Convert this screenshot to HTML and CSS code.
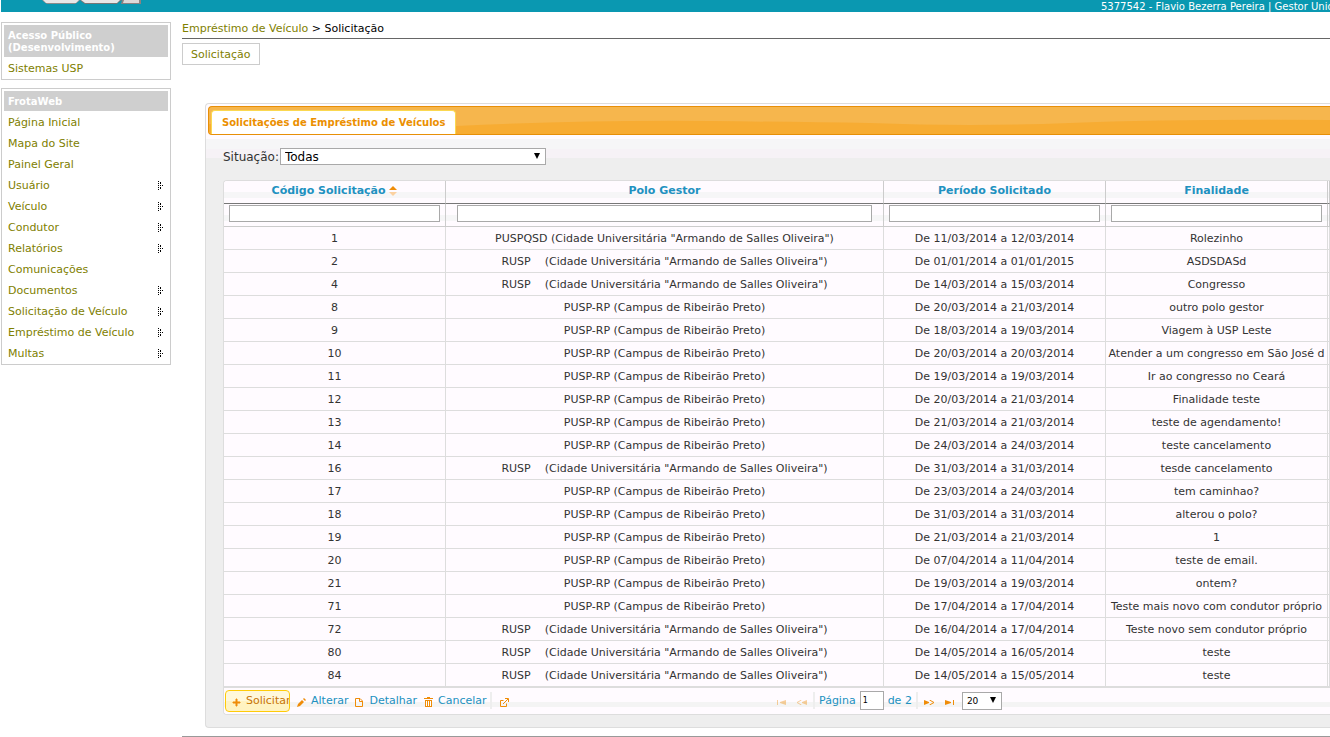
FILE: index.html
```html
<!DOCTYPE html>
<html lang="pt-BR">
<head>
<meta charset="utf-8">
<title>FrotaWeb - Solicitação</title>
<link rel="stylesheet" href="styles.css">
</head>
<body>
<svg class="defs" width="0" height="0" aria-hidden="true"><symbol id="dots" viewBox="0 0 6 9"><path d="M0 0h1v1h-1zM0 2h1v1h-1zM0 4h1v1h-1zM0 6h1v1h-1zM0 8h1v1h-1zM2 2h1v1h-1zM2 4h1v1h-1zM2 6h1v1h-1zM4 4h1v1h-1zM2 1h1v1h-1zM2 7h1v1h-1z"/></symbol></svg>
<header class="topbar">
  <svg class="logo" width="100" height="5" viewBox="0 0 100 5" aria-hidden="true">
    <path d="M0 0H38L36 2L33 4H5L2 2Z" fill="#8b8b8b"/><path d="M1 0H37L34 3H4Z" fill="#e9e7e7"/>
    <path d="M38 0H80L77 2L75 4H43L40 2Z" fill="#777"/><path d="M39 0H78L75 3H43Z" fill="#e9e7e7"/>
    <path d="M80 0H99V4H79Z" fill="#8b8181"/><path d="M82 0H97V3H81Z" fill="#ddd9d9"/>
  </svg>
  <span class="user">5377542 - Flavio Bezerra Pereira | Gestor Unidade</span>
</header>
<div class="page">
  <aside class="side">
    <nav class="box">
      <h2 class="box-title">Acesso Público (Desenvolvimento)</h2>
      <a class="item" href="#">Sistemas USP</a>
    </nav>
    <nav class="box">
      <h2 class="box-title">FrotaWeb</h2>
      <a class="item" href="#">Página Inicial</a>
      <a class="item" href="#">Mapa do Site</a>
      <a class="item" href="#">Painel Geral</a>
      <a class="item" href="#">Usuário<svg class="more" width="6" height="9" aria-hidden="true"><use href="#dots"/></svg></a>
      <a class="item" href="#">Veículo<svg class="more" width="6" height="9" aria-hidden="true"><use href="#dots"/></svg></a>
      <a class="item" href="#">Condutor<svg class="more" width="6" height="9" aria-hidden="true"><use href="#dots"/></svg></a>
      <a class="item" href="#">Relatórios<svg class="more" width="6" height="9" aria-hidden="true"><use href="#dots"/></svg></a>
      <a class="item" href="#">Comunicações</a>
      <a class="item" href="#">Documentos<svg class="more" width="6" height="9" aria-hidden="true"><use href="#dots"/></svg></a>
      <a class="item" href="#">Solicitação de Veículo<svg class="more" width="6" height="9" aria-hidden="true"><use href="#dots"/></svg></a>
      <a class="item" href="#">Empréstimo de Veículo<svg class="more" width="6" height="9" aria-hidden="true"><use href="#dots"/></svg></a>
      <a class="item" href="#">Multas<svg class="more" width="6" height="9" aria-hidden="true"><use href="#dots"/></svg></a>
    </nav>
  </aside>
  <main class="main">
    <div class="crumbs"><a href="#">Empréstimo de Veículo</a> &gt; Solicitação</div>
    <a class="local" href="#">Solicitação</a>
    <section class="panel">
      <div class="tabs">
        <svg class="wave" viewBox="0 0 1120 27" preserveAspectRatio="none" aria-hidden="true"><path d="M0 17Q120 23 247 19Q370 13 500 14Q590 15 660 16Q760 20 860 16Q960 12 1120 13V27H0Z" fill="#f7ac33"/></svg>
        <a class="tab" href="#">Solicitações de Empréstimo de Veículos</a>
      </div>
      <div class="body">
        <div class="filter">
          <label for="situacao">Situação:</label>
          <span class="pick"><select id="situacao"><option>Todas</option></select></span>
        </div>
        <div class="grid">
          <table class="list">
            <colgroup><col class="c-narrow"><col class="c-wide"><col class="c-narrow"><col class="c-narrow"><col></colgroup>
            <thead>
              <tr class="heads"><th>Código Solicitação <svg class="sort" width="8" height="10" viewBox="0 0 8 10" aria-hidden="true"><path d="M0 4L4 0L8 4Z" fill="#ef8c08"/><path d="M0 6H8L4 10Z" fill="#fbd1a0"/></svg></th><th>Polo Gestor</th><th>Período Solicitado</th><th>Finalidade</th><th></th></tr>
              <tr class="search"><th><input type="text" aria-label="Código Solicitação"></th><th class="inset"><input type="text" aria-label="Polo Gestor"></th><th><input type="text" aria-label="Período Solicitado"></th><th><input type="text" aria-label="Finalidade"></th><th></th></tr>
            </thead>
            <tbody>
              <tr><td>1</td><td>PUSPQSD (Cidade Universitária "Armando de Salles Oliveira")</td><td>De 11/03/2014 a 12/03/2014</td><td>Rolezinho</td><td></td></tr>
              <tr><td>2</td><td>RUSP &nbsp; &nbsp;(Cidade Universitária "Armando de Salles Oliveira")</td><td>De 01/01/2014 a 01/01/2015</td><td>ASDSDASd</td><td></td></tr>
              <tr><td>4</td><td>RUSP &nbsp; &nbsp;(Cidade Universitária "Armando de Salles Oliveira")</td><td>De 14/03/2014 a 15/03/2014</td><td>Congresso</td><td></td></tr>
              <tr><td>8</td><td>PUSP-RP (Campus de Ribeirão Preto)</td><td>De 20/03/2014 a 21/03/2014</td><td>outro polo gestor</td><td></td></tr>
              <tr><td>9</td><td>PUSP-RP (Campus de Ribeirão Preto)</td><td>De 18/03/2014 a 19/03/2014</td><td>Viagem à USP Leste</td><td></td></tr>
              <tr><td>10</td><td>PUSP-RP (Campus de Ribeirão Preto)</td><td>De 20/03/2014 a 20/03/2014</td><td>Atender a um congresso em São José d</td><td></td></tr>
              <tr><td>11</td><td>PUSP-RP (Campus de Ribeirão Preto)</td><td>De 19/03/2014 a 19/03/2014</td><td>Ir ao congresso no Ceará</td><td></td></tr>
              <tr><td>12</td><td>PUSP-RP (Campus de Ribeirão Preto)</td><td>De 20/03/2014 a 21/03/2014</td><td>Finalidade teste</td><td></td></tr>
              <tr><td>13</td><td>PUSP-RP (Campus de Ribeirão Preto)</td><td>De 21/03/2014 a 21/03/2014</td><td>teste de agendamento!</td><td></td></tr>
              <tr><td>14</td><td>PUSP-RP (Campus de Ribeirão Preto)</td><td>De 24/03/2014 a 24/03/2014</td><td>teste cancelamento</td><td></td></tr>
              <tr><td>16</td><td>RUSP &nbsp; &nbsp;(Cidade Universitária "Armando de Salles Oliveira")</td><td>De 31/03/2014 a 31/03/2014</td><td>tesde cancelamento</td><td></td></tr>
              <tr><td>17</td><td>PUSP-RP (Campus de Ribeirão Preto)</td><td>De 23/03/2014 a 24/03/2014</td><td>tem caminhao?</td><td></td></tr>
              <tr><td>18</td><td>PUSP-RP (Campus de Ribeirão Preto)</td><td>De 31/03/2014 a 31/03/2014</td><td>alterou o polo?</td><td></td></tr>
              <tr><td>19</td><td>PUSP-RP (Campus de Ribeirão Preto)</td><td>De 21/03/2014 a 21/03/2014</td><td>1</td><td></td></tr>
              <tr><td>20</td><td>PUSP-RP (Campus de Ribeirão Preto)</td><td>De 07/04/2014 a 11/04/2014</td><td>teste de email.</td><td></td></tr>
              <tr><td>21</td><td>PUSP-RP (Campus de Ribeirão Preto)</td><td>De 19/03/2014 a 19/03/2014</td><td>ontem?</td><td></td></tr>
              <tr><td>71</td><td>PUSP-RP (Campus de Ribeirão Preto)</td><td>De 17/04/2014 a 17/04/2014</td><td>Teste mais novo com condutor próprio</td><td></td></tr>
              <tr><td>72</td><td>RUSP &nbsp; &nbsp;(Cidade Universitária "Armando de Salles Oliveira")</td><td>De 16/04/2014 a 17/04/2014</td><td>Teste novo sem condutor próprio</td><td></td></tr>
              <tr><td>80</td><td>RUSP &nbsp; &nbsp;(Cidade Universitária "Armando de Salles Oliveira")</td><td>De 14/05/2014 a 16/05/2014</td><td>teste</td><td></td></tr>
              <tr><td>84</td><td>RUSP &nbsp; &nbsp;(Cidade Universitária "Armando de Salles Oliveira")</td><td>De 14/05/2014 a 15/05/2014</td><td>teste</td><td></td></tr>
            </tbody>
          </table>
          <div class="bar">
            <div class="actions">
              <button class="act on" type="button"><svg width="9" height="9" viewBox="0 0 9 9" aria-hidden="true"><path d="M4 1H5V4H8V5H5V8H4V5H1V4H4Z" fill="#ef8c08" stroke="#ef8c08"/></svg>Solicitar</button>
              <button class="act" type="button"><svg width="9" height="9" viewBox="0 0 9 9" aria-hidden="true"><path d="M0 9L1 6L5 2L7 4L3 8ZM6 1L7 0L9 2L8 3Z" fill="#ef8c08"/></svg>Alterar</button>
              <button class="act" type="button"><svg width="9" height="9" viewBox="0 0 9 9" aria-hidden="true"><path d="M.5 .5H5L7.500 3V8.500H.5ZM4.500 1V3.500H7" fill="none" stroke="#ef8c08"/></svg>Detalhar</button>
              <button class="act" type="button"><svg width="9" height="10" viewBox="0 0 9 10" aria-hidden="true"><path d="M3 0H6V1H9V2H0V1H3ZM1 3H8V10H1Z" fill="#ef8c08"/><path d="M2.500 4V9M4.500 4V9M6.500 4V9" stroke="#fff"/></svg>Cancelar</button>
              <span class="sep"></span>
              <button class="act" type="button" aria-label="Exportar"><svg width="9" height="9" viewBox="0 0 9 9" aria-hidden="true"><path d="M3.500 2.500H.5V8.500H6.500V5.500M3 6L8 1M5 .5H8.500V4" fill="none" stroke="#ef8c08"/></svg></button>
            </div>
            <div class="pager">
              <button class="nav off" type="button" aria-label="Primeira"><svg width="9" height="5" viewBox="0 0 9 5" aria-hidden="true"><path d="M0 0H1V5H0ZM9 0V5L3 3V2Z" /></svg></button>
              <button class="nav off" type="button" aria-label="Anterior"><svg width="11" height="5" viewBox="0 0 11 5" aria-hidden="true"><path d="M11 0V5L6 3V2Z"/><path d="M5.500 0L1 2.500L5.500 5" class="line"/></svg></button>
              <span class="sep"></span>
              <label for="pg">Página</label>
              <input id="pg" class="pg-in" type="text" value="1">
              <span>de 2</span>
              <span class="sep"></span>
              <button class="nav" type="button" aria-label="Próxima"><svg width="11" height="5" viewBox="0 0 11 5" aria-hidden="true"><path d="M0 0V5L5 3V2Z"/><path d="M5.500 0L10 2.500L5.500 5" class="line"/></svg></button>
              <button class="nav" type="button" aria-label="Última"><svg width="9" height="5" viewBox="0 0 9 5" aria-hidden="true"><path d="M8 0H9V5H8ZM0 0V5L6 3V2Z"/></svg></button>
              <span class="pick small"><select aria-label="Linhas por página"><option>20</option></select></span>
            </div>
          </div>
        </div>
      </div>
    </section>
    <div class="rule"></div>
  </main>
</div>
</body>
</html>
```
FILE: styles.css
```css
* { box-sizing: border-box; }
body {
  margin: 0;
  background: #fff;
  color: #333;
  font: 11px/12px Verdana, "DejaVu Sans", sans-serif;
  overflow: hidden;
}
a { text-decoration: none; color: #808000; }
button { border: 0; background: none; padding: 0; margin: 0; font: inherit; }
.defs { display: none; }

.topbar {
  display: flex;
  align-items: flex-start;
  justify-content: space-between;
  height: 12px;
  margin-left: 1px;
  padding-left: 41px;
  background: #0a98b1;
  overflow: hidden;
}
.user { flex: 0 0 229px; min-width: 0; color: #fff; font-size: 10px; line-height: 14px; white-space: nowrap; }

.page { display: flex; gap: 11px; margin-left: 1px; }
.side { flex: 0 0 170px; padding-top: 10px; }
.box { border: 1px solid #ccc; padding: 2px 2px 1px; margin-bottom: 8px; }
.box-title {
  margin: 0;
  padding: 5px 4px 3px;
  background: #cfcfcf;
  color: #fff;
  font-size: 10px;
  line-height: 12px;
}
.item {
  display: flex;
  justify-content: space-between;
  align-items: center;
  height: 21px;
  padding: 2px 4px 0;
}
.more { fill: #000; }

.main { flex: 1; min-width: 0; }
.crumbs { padding: 11px 0 3px; margin-bottom: 4px; border-bottom: 1px solid #666; color: #000; }
.local { display: inline-block; padding: 5px 8px 3px; border: 1px solid #ccc; }

.panel {
  margin: 38px 0 0 23px;
  border: 1px solid #ddd;
  border-right: 0;
  border-radius: 4px 0 0 4px;
  padding: 2px 0 0 2px;
  background: #eee linear-gradient(#fffbff 35px, #f6f6f7 35px 45px, #f6f2f6 45px 54px, #eee 54px) no-repeat;
}
.tabs {
  position: relative;
  display: flex;
  padding: 3px 2px 0;
  border: 1px solid #e78f08;
  border-right: 0;
  border-radius: 4px 0 0 4px;
  background: #f6b64d;
  overflow: hidden;
}
.wave { position: absolute; inset: 0; width: 100%; height: 100%; }
.tab {
  position: relative;
  padding: 6px 10px 5px;
  border: 1px solid #fbd850;
  border-bottom: 0;
  border-radius: 4px 4px 0 0;
  background: #fff;
  color: #eb8f00;
  font-size: 10px;
  font-weight: bold;
}
.body { padding: 13px 0 12px 15px; }
.filter { display: flex; align-items: center; gap: 1px; margin-bottom: 15px; font-size: 12px; }
.pick { position: relative; display: inline-flex; width: 266px; }
.pick::after {
  content: "";
  position: absolute;
  right: 6px;
  top: 5px;
  border: solid transparent;
  border-width: 6px 3px 0;
  border-top-color: #000;
}
.pick select {
  appearance: none;
  width: 100%;
  height: 17px;
  margin: 0;
  padding: 0 4px;
  border: 1px solid #a9a9a9;
  border-radius: 0;
  background: #fff;
  color: #000;
  font: inherit;
}

.grid { border: 1px solid #ddd; border-right: 0; border-radius: 4px 0 0 4px; background: #fffbff; overflow: hidden; }
.list { width: 100%; border-collapse: separate; border-spacing: 0; table-layout: fixed; }
.c-narrow { width: 222px; }
.c-wide { width: 438px; }
th, td {
  height: 23px;
  padding: 2px 2px 0;
  border-right: 1px solid #ddd;
  border-bottom: 1px solid #ddd;
  text-align: center;
  white-space: nowrap;
  overflow: hidden;
}
th { border-color: #ccc; background: #fffbff linear-gradient(#f6f6f7, #f6f6f7) 0 11px / 100% 6px no-repeat; color: #2191c0; }
.heads th { border-bottom-color: #777; padding: 0 2px 2px; }
.search th { padding: 0 5px 3px; }
.search th.inset { padding: 0 11px 3px; }
.search input { display: block; width: 100%; height: 17px; margin: 0; border: 1px solid #a9a9a9; background: #fff; padding: 0 2px; font: inherit; }
.sort { vertical-align: -2px; }

.bar {
  display: grid;
  grid-template-columns: 549px 1fr;
  align-items: center;
  height: 27px;
  padding-bottom: 1px;
  border-top: 1px solid #ddd;
  background: linear-gradient(#fffbff 14px, #f4f4f4 14px 19px, #fffbff 19px);
  color: #2191c0;
}
.actions, .pager { display: flex; align-items: center; }
.actions { gap: 7px; padding-left: 1px; }
.act { display: flex; align-items: center; gap: 5px; height: 22px; color: #2191c0; }
.act svg { flex: none; margin-top: 3px; }
.on { width: 65px; padding-left: 6px; border: 1px solid #fecb09; border-radius: 4px; background: linear-gradient(#fff8db 10px, #fff3c2 10px); color: #c77405; overflow: hidden; }
.sep { width: 2px; height: 17px; background: #eee; }
.actions .sep { margin: 0 1px 0 -4px; }
.pager { gap: 4px; }
.nav { width: 16px; height: 16px; padding-top: 3px; fill: #ef8c08; }
.nav svg { display: block; margin: 0 auto; }
.line { fill: none; stroke: #ef8c08; }
.off { opacity: .4; }
.pg-in { width: 24px; height: 19px; margin: 0; padding: 0 2px; border: 1px solid #a9a9a9; background: #fff; color: #000; font: inherit; font-size: 8px; }
.small { width: 40px; }
.small select { height: 18px; font-size: 9px; }
.rule { margin-top: 8px; border-top: 1px solid #999; }
```
